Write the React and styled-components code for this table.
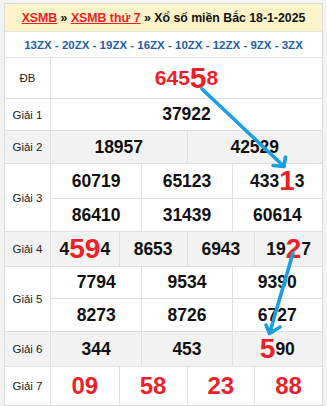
import styled, { createGlobalStyle } from "styled-components";

const GlobalStyle = createGlobalStyle`
  html, body {
    margin: 0;
    padding: 0;
    background: #f3f3f3;
  }
  body {
    font-family: "Liberation Sans", Arial, sans-serif;
  }
`;

const RED = "#ee1f29";

const Page = styled.div`
  position: relative;
  width: 327px;
  height: 406px;
  padding: 3px 0 0 4px;
  box-sizing: border-box;
  overflow: hidden;
`;

const Board = styled.div`
  width: 319px;
  box-sizing: border-box;
  border: 1px solid #dadada;
  background: #fff;
`;

const Title = styled.div`
  height: 28px;
  box-sizing: border-box;
  border-bottom: 1px solid #e2e2e2;
  background: #fdf3c8;
  display: flex;
  align-items: center;
  justify-content: center;
  font-size: 12.3px;
  font-weight: bold;
  color: #111;
  white-space: pre;
`;

const TitleLink = styled.a`
  color: ${RED};
  text-decoration: underline;
`;

const Codes = styled.div`
  height: 26px;
  box-sizing: border-box;
  border-bottom: 1px solid #e2e2e2;
  display: flex;
  align-items: center;
  justify-content: center;
  font-size: 11.5px;
  font-weight: bold;
  color: #1d5ea6;
  white-space: pre;
`;

const PrizeRow = styled.div`
  display: grid;
  grid-template-columns: 46px 1fr;
  border-bottom: 1px solid #e0e0e0;
  background: ${(p) => (p.$shaded ? "#f2f2f2" : "#fff")};
  &:last-child {
    border-bottom: none;
  }
`;

const Label = styled.div`
  border-right: 1px solid #e0e0e0;
  display: flex;
  align-items: center;
  justify-content: center;
  font-size: 11.5px;
  color: #222;
`;

const Values = styled.div`
  display: grid;
  grid-template-columns: repeat(${(p) => p.$cols}, 1fr);
  grid-template-rows: ${(p) => p.$rows.map((h) => `${h}px`).join(" ")};
`;

const sizes = {
  normal: { size: "17.5px", color: "#111" },
  special: { size: "21px", color: RED },
  seventh: { size: "24px", color: RED },
};

const Cell = styled.div`
  box-sizing: border-box;
  display: flex;
  align-items: center;
  justify-content: center;
  font-size: ${(p) => sizes[p.$tone].size};
  font-weight: bold;
  color: ${(p) => sizes[p.$tone].color};
  white-space: pre;
  &:not(:nth-child(${(p) => p.$cols}n + 1)) {
    border-left: 1px solid #e0e0e0;
  }
  &:nth-child(n + ${(p) => p.$cols + 1}) {
    border-top: 1px solid #e0e0e0;
  }
`;

const Hl = styled.span`
  font-size: ${(p) => p.$size}px;
  color: ${RED};
  line-height: 0;
`;

const Overlay = styled.svg`
  position: absolute;
  top: 0;
  left: 0;
  width: 327px;
  height: 406px;
  pointer-events: none;
`;

const prizes = [
  { label: "ĐB", cols: 1, rows: [40], tone: "special", big: 30, values: ["645[5]8"] },
  { label: "Giải 1", cols: 1, rows: [31], values: ["37922"] },
  { label: "Giải 2", cols: 2, rows: [32], shaded: true, values: ["18957", "42529"] },
  {
    label: "Giải 3",
    cols: 3,
    rows: [34, 33],
    values: ["60719", "65123", "433[1]3", "86410", "31439", "60614"],
  },
  { label: "Giải 4", cols: 4, rows: [34], shaded: true, values: ["4[59]4", "8653", "6943", "19[2]7"] },
  {
    label: "Giải 5",
    cols: 3,
    rows: [31, 33],
    values: ["7794", "9534", "9390", "8273", "8726", "6727"],
  },
  { label: "Giải 6", cols: 3, rows: [34], shaded: true, values: ["344", "453", "[5]90"] },
  { label: "Giải 7", cols: 4, rows: [38], tone: "seventh", values: ["09", "58", "23", "88"] },
];

function Number({ value, big }) {
  const parts = value.split(/(\[[^\]]+\])/).filter(Boolean);
  return parts.map((part, i) =>
    part.startsWith("[") ? (
      <Hl key={i} $size={big}>
        {part.slice(1, -1)}
      </Hl>
    ) : (
      <span key={i}>{part}</span>
    )
  );
}

export default function App() {
  return (
    <Page>
      <GlobalStyle />
      <Board>
        <Title>
          <TitleLink>XSMB</TitleLink> » <TitleLink>XSMB thứ 7</TitleLink> » Xổ số miền Bắc 18-1-2025
        </Title>
        <Codes>13ZX - 20ZX - 19ZX - 16ZX - 10ZX - 12ZX - 9ZX - 3ZX</Codes>
        {prizes.map((p) => (
          <PrizeRow key={p.label} $shaded={p.shaded}>
            <Label>{p.label}</Label>
            <Values $cols={p.cols} $rows={p.rows}>
              {p.values.map((v, i) => (
                <Cell key={i} $cols={p.cols} $tone={p.tone || "normal"}>
                  <Number value={v} big={p.big || 28} />
                </Cell>
              ))}
            </Values>
          </PrizeRow>
        ))}
      </Board>
      <Overlay viewBox="0 0 327 406">
        <g
          stroke="#1a9fe3"
          strokeWidth="3.6"
          strokeLinecap="round"
          strokeLinejoin="round"
          fill="none"
        >
          <path d="M202 89 L284 166.5 M273 165.5 L284 166.5 L285.5 157" />
          <path d="M293 253 L269.5 333.5 M266 325 L269.5 333.5 L280 327" />
        </g>
      </Overlay>
    </Page>
  );
}
